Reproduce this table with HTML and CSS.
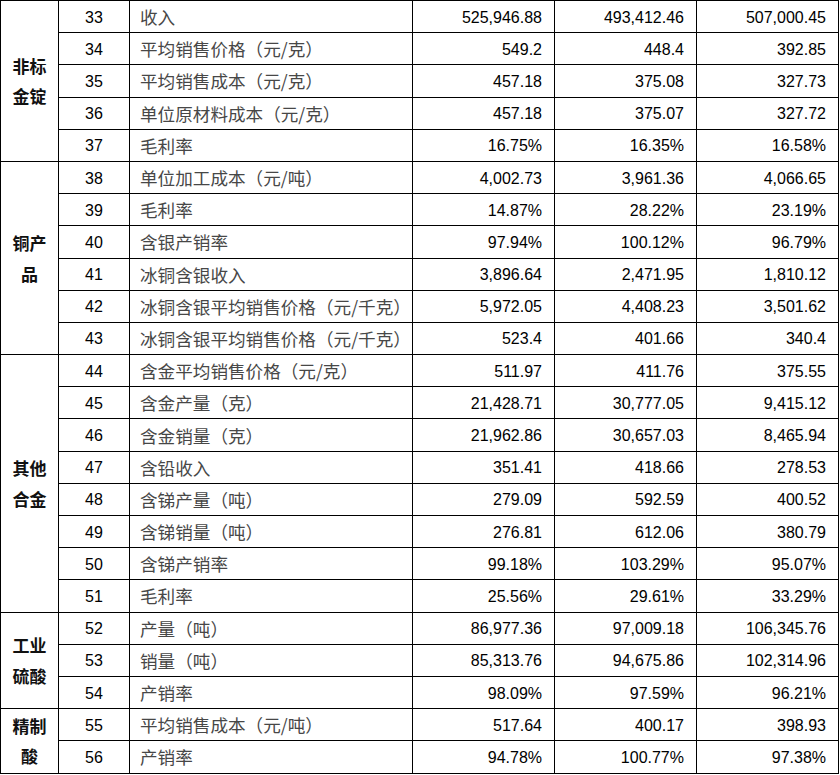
FILE: index.html
```html
<!DOCTYPE html>
<html lang="zh-CN">
<head>
<meta charset="utf-8">
<title>经营数据</title>
<link rel="stylesheet" href="styles.css">
</head>
<body>
<table class="data">
  <colgroup>
    <col class="c-group"><col class="c-no"><col class="c-name"><col class="c-v"><col class="c-v"><col class="c-v">
  </colgroup>
  <tbody>
    <tr><td class="grp" rowspan="5">非标<br>金锭</td><td class="no">33</td><td class="name">收入</td><td class="num">525,946.88</td><td class="num">493,412.46</td><td class="num">507,000.45</td></tr>
    <tr><td class="no">34</td><td class="name">平均销售价格（元/克）</td><td class="num">549.2</td><td class="num">448.4</td><td class="num">392.85</td></tr>
    <tr><td class="no">35</td><td class="name">平均销售成本（元/克）</td><td class="num">457.18</td><td class="num">375.08</td><td class="num">327.73</td></tr>
    <tr><td class="no">36</td><td class="name">单位原材料成本（元/克）</td><td class="num">457.18</td><td class="num">375.07</td><td class="num">327.72</td></tr>
    <tr><td class="no">37</td><td class="name">毛利率</td><td class="num">16.75%</td><td class="num">16.35%</td><td class="num">16.58%</td></tr>

    <tr><td class="grp" rowspan="6">铜产<br>品</td><td class="no">38</td><td class="name">单位加工成本（元/吨）</td><td class="num">4,002.73</td><td class="num">3,961.36</td><td class="num">4,066.65</td></tr>
    <tr><td class="no">39</td><td class="name">毛利率</td><td class="num">14.87%</td><td class="num">28.22%</td><td class="num">23.19%</td></tr>
    <tr><td class="no">40</td><td class="name">含银产销率</td><td class="num">97.94%</td><td class="num">100.12%</td><td class="num">96.79%</td></tr>
    <tr><td class="no">41</td><td class="name">冰铜含银收入</td><td class="num">3,896.64</td><td class="num">2,471.95</td><td class="num">1,810.12</td></tr>
    <tr><td class="no">42</td><td class="name">冰铜含银平均销售价格<span class="tight">（</span>元/千克）</td><td class="num">5,972.05</td><td class="num">4,408.23</td><td class="num">3,501.62</td></tr>
    <tr><td class="no">43</td><td class="name">冰铜含银平均销售价格<span class="tight">（</span>元/千克）</td><td class="num">523.4</td><td class="num">401.66</td><td class="num">340.4</td></tr>

    <tr><td class="grp" rowspan="8">其他<br>合金</td><td class="no">44</td><td class="name">含金平均销售价格（元/克）</td><td class="num">511.97</td><td class="num">411.76</td><td class="num">375.55</td></tr>
    <tr><td class="no">45</td><td class="name">含金产量（克）</td><td class="num">21,428.71</td><td class="num">30,777.05</td><td class="num">9,415.12</td></tr>
    <tr><td class="no">46</td><td class="name">含金销量（克）</td><td class="num">21,962.86</td><td class="num">30,657.03</td><td class="num">8,465.94</td></tr>
    <tr><td class="no">47</td><td class="name">含铅收入</td><td class="num">351.41</td><td class="num">418.66</td><td class="num">278.53</td></tr>
    <tr><td class="no">48</td><td class="name">含锑产量（吨）</td><td class="num">279.09</td><td class="num">592.59</td><td class="num">400.52</td></tr>
    <tr><td class="no">49</td><td class="name">含锑销量（吨）</td><td class="num">276.81</td><td class="num">612.06</td><td class="num">380.79</td></tr>
    <tr><td class="no">50</td><td class="name">含锑产销率</td><td class="num">99.18%</td><td class="num">103.29%</td><td class="num">95.07%</td></tr>
    <tr><td class="no">51</td><td class="name">毛利率</td><td class="num">25.56%</td><td class="num">29.61%</td><td class="num">33.29%</td></tr>

    <tr><td class="grp" rowspan="3">工业<br>硫酸</td><td class="no">52</td><td class="name">产量（吨）</td><td class="num">86,977.36</td><td class="num">97,009.18</td><td class="num">106,345.76</td></tr>
    <tr><td class="no">53</td><td class="name">销量（吨）</td><td class="num">85,313.76</td><td class="num">94,675.86</td><td class="num">102,314.96</td></tr>
    <tr><td class="no">54</td><td class="name">产销率</td><td class="num">98.09%</td><td class="num">97.59%</td><td class="num">96.21%</td></tr>

    <tr><td class="grp" rowspan="2">精制<br>酸</td><td class="no">55</td><td class="name">平均销售成本（元/吨）</td><td class="num">517.64</td><td class="num">400.17</td><td class="num">398.93</td></tr>
    <tr><td class="no">56</td><td class="name">产销率</td><td class="num">94.78%</td><td class="num">100.77%</td><td class="num">97.38%</td></tr>
  </tbody>
</table>
</body>
</html>
```
FILE: styles.css
```css
html, body {
  margin: 0;
  padding: 0;
  background: #ffffff;
}

.data {
  border-collapse: collapse;
  table-layout: fixed;
  width: 839px;
  font-family: "Liberation Sans", Arial, "Noto Sans CJK SC", sans-serif;
  font-size: 16px;
  color: #000;
}

.c-group { width: 58px; }
.c-no { width: 71px; }
.c-name { width: 283px; }
.c-v { width: 142px; }

.data tr {
  height: 32.2px;
}

.data td {
  border: 1px solid #000;
  padding: 1px 12px 0 10px;
  vertical-align: middle;
  white-space: nowrap;
  line-height: 20px;
}

.data td.grp {
  font-family: "Noto Sans CJK SC", sans-serif;
  font-weight: 700;
  font-size: 17px;
  line-height: 30.5px;
  text-align: center;
  padding: 1px 0 0 0;
  color: #111;
}

.data td.no {
  text-align: center;
  padding: 2px 0 0 0;
}

.data td.name {
  font-family: "Noto Sans CJK SC", sans-serif;
  font-size: 17.6px;
  color: #474747;
  padding-left: 10px;
  padding-right: 0;
}

.data td.num {
  text-align: right;
  padding-right: 12px;
  padding-top: 2px;
}

.tight {
  letter-spacing: -5px;
  margin-right: 5px;
}
```
